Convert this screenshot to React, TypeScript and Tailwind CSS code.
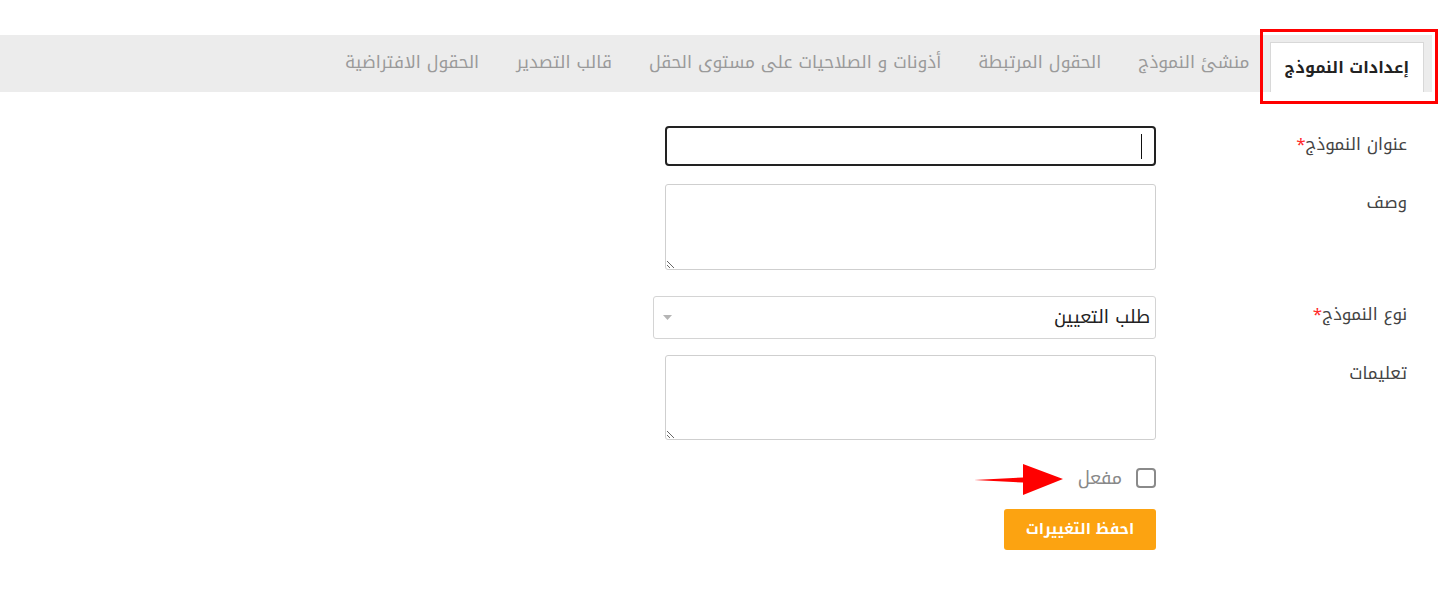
import React from 'react';

const tabs = [
  'منشئ النموذج',
  'الحقول المرتبطة',
  'أذونات و الصلاحيات على مستوى الحقل',
  'قالب التصدير',
  'الحقول الافتراضية',
];

const font = { fontFamily: '"Noto Kufi Arabic", "Noto Sans Arabic", "DejaVu Sans", sans-serif' };

const Label: React.FC<{ text: string; required?: boolean }> = ({ text, required }) => (
  <div className="w-[251px] shrink-0 pt-[7px] text-[17px] leading-[22px] text-[#444]">
    {text}
    {required && <span className="text-[#ff2a2a]">*</span>}
  </div>
);

const Arrow: React.FC = () => (
  <svg width="90" height="32" viewBox="0 0 90 32" className="absolute right-[calc(100%+14px)] top-[-4px]">
    <polygon points="0,16 49,13.5 49,0 89,15 49,31 49,18.5" fill="#ff0000" />
  </svg>
);

const App: React.FC = () => {
  return (
    <div dir="rtl" className="min-h-screen bg-white pt-[35px] pr-[19px]" style={font}>
      {/* tabs */}
      <div className="relative flex h-[57px] items-end bg-[#ececec] pr-[8px]">
        <div className="flex h-[50px] items-center border border-b-0 border-[#d8d8d8] bg-white px-[14px] text-[16px] font-bold text-[#222]">
          إعدادات النموذج
        </div>
        <div className="flex h-full items-center gap-[37px] pr-[20px] text-[17.4px] text-[#9a9a9a]">
          {tabs.map((t) => (
            <span key={t}>{t}</span>
          ))}
        </div>
        <div className="absolute right-[-6px] top-[-6px] h-[75px] w-[178px] border-[3px] border-[#ff0000]" />
      </div>

      {/* form */}
      <div className="flex flex-col pr-[25px] pt-[34px]">
        <div className="flex">
          <Label text="عنوان النموذج" required />
          <div className="relative h-[40px] w-[491px] rounded-[4px] border-2 border-[#222] bg-white">
            <div className="absolute right-[12px] top-[6px] h-[25px] w-px bg-[#111]" />
          </div>
        </div>

        <div className="mt-[18px] flex">
          <Label text="وصف" />
          <textarea className="h-[86px] w-[491px] resize rounded-[3px] border border-[#cfcfcf] outline-none" />
        </div>

        <div className="mt-[26px] flex">
          <Label text="نوع النموذج" required />
          <div className="flex h-[43px] w-[503px] items-center justify-between rounded-[3px] border border-[#d4d4d4] bg-white pr-[5px] pl-[9px]">
            <span className="text-[18px] text-[#222]">طلب التعيين</span>
            <svg width="9" height="5" viewBox="0 0 9 5">
              <polygon points="0,0 9,0 4.5,5" fill="#b5b5b5" />
            </svg>
          </div>
        </div>

        <div className="mt-[16px] flex">
          <Label text="تعليمات" />
          <textarea className="h-[85px] w-[491px] resize rounded-[3px] border border-[#cfcfcf] outline-none" />
        </div>

        <div className="mt-[28px] flex">
          <div className="w-[251px] shrink-0" />
          <div className="relative flex items-center gap-[14px]">
            <div className="h-[20px] w-[20px] rounded-[4px] border-2 border-[#8a8a8a] bg-white" />
            <span className="text-[18px] leading-[20px] text-[#888]">مفعل</span>
            <Arrow />
          </div>
        </div>

        <div className="mt-[21px] flex">
          <div className="w-[251px] shrink-0" />
          <button className="h-[41px] w-[152px] rounded-[3px] bg-[#fca311] text-[15px] font-bold text-white">
            احفظ التغييرات
          </button>
        </div>
      </div>
    </div>
  );
};

export default App;
